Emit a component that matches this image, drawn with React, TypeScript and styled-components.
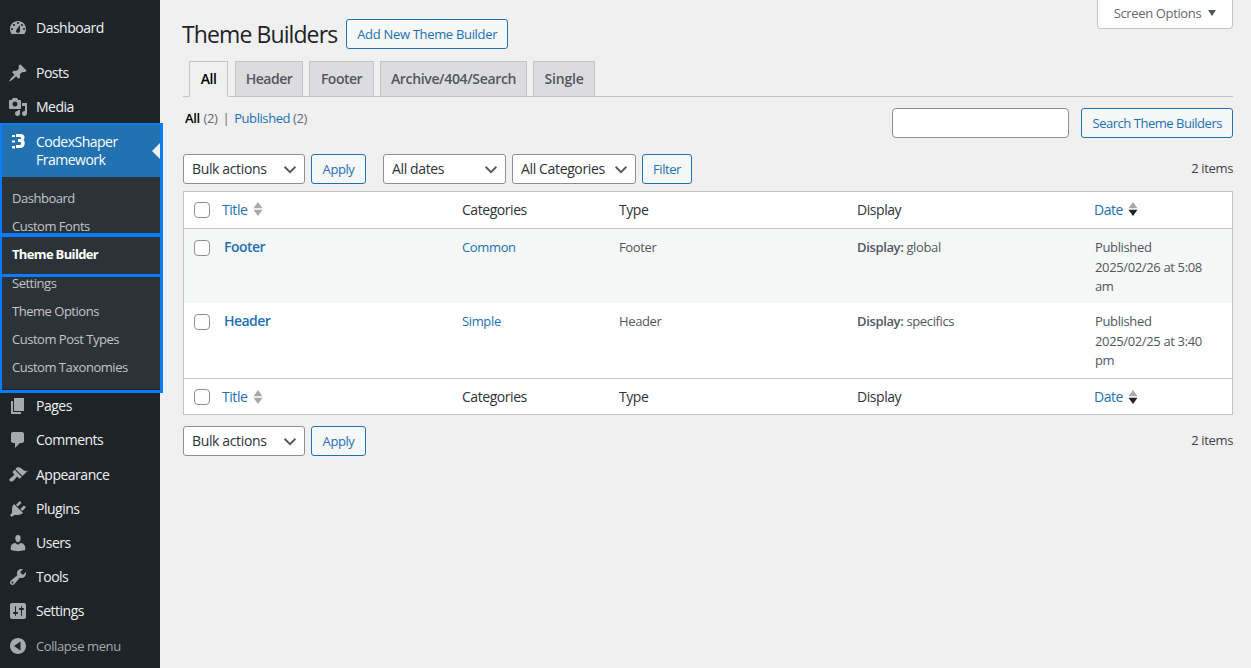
import React from 'react';
import styled, { createGlobalStyle } from 'styled-components';

const Global = createGlobalStyle`
  html, body { margin: 0; padding: 0; background: #f0f0f1; height: 100%; overflow: hidden; }
  body { font-family: "Open Sans", "Noto Sans", sans-serif; font-size: 13px; color: #3c434a; letter-spacing: -0.36px; }
  * { box-sizing: border-box; }
`;

const Page = styled.div`display: flex; width: 1251px; height: 668px; overflow: hidden;`;
const Side = styled.nav`width: 160px; flex: none; height: 668px; background: #1d2327; padding-top: 11px; position: relative; z-index: 2;`;
const Item = styled.div<{ $gapAfter?: number }>`
  height: 34px; display: flex; align-items: center; color: #f0f0f1; font-size: 14px; padding: 0 0 2px 36px; position: relative; letter-spacing: -0.5px;
  margin-bottom: ${p => p.$gapAfter ?? 0}px;
`;
const IconBox = styled.span`
  position: absolute; left: 8px; top: 7px; width: 20px; height: 20px; color: #a7aaad; display: block;
  svg { display: block; width: 20px; height: 20px; fill: currentColor; }
`;
const Group = styled.div`position: relative;`;
const Current = styled.div`
  height: 53px; background: #2271b1; color: #fff; font-size: 14px; line-height: 18px; padding: 9px 0 0 36px; position: relative; letter-spacing: -0.5px;
  &::after { content: ""; position: absolute; right: 0; top: 19px; border: 8px solid transparent; border-right-color: #f0f0f1; border-left-width: 0; }
`;
const LogoBox = styled(IconBox)`color: #fff; top: 8px;`;
const Sub = styled.div`background: #2c3338; height: 212px; padding-top: 7px; letter-spacing: -0.48px;`;
const SubItem = styled.div<{ $active?: boolean }>`
  height: ${p => (p.$active ? 29 : 28)}px; line-height: 28px; padding-left: 12px; font-size: 13px;
  color: ${p => (p.$active ? '#fff' : '#c3c4c7')}; font-weight: ${p => (p.$active ? 700 : 400)}; letter-spacing: ${p => (p.$active ? '-0.66px' : 'inherit')};
`;
const Outline = styled.div`position: absolute; left: 0; top: -1px; width: 163px; height: 270px; border: 2px solid #0a7cff; border-width: 2px 3px 3px 2px; pointer-events: none; z-index: 3;`;
const ActiveOutline = styled.div`position: absolute; left: 0; top: 109px; width: 163px; height: 44px; border: solid #0a7cff; border-width: 4px 3px 3px 2px; pointer-events: none; z-index: 3;`;
const Collapse = styled(Item)`color: #a7aaad; font-size: 13px; margin-top: 1px; padding-bottom: 0; letter-spacing: -0.4px;`;

const Main = styled.main`flex: 1; padding: 0 18px 0 23px; position: relative;`;
const ScreenOptions = styled.div`
  position: absolute; right: 18px; top: 0; width: 136px; height: 29px; background: #fff; border: 1px solid #c3c4c7; border-top: 0;
  border-radius: 0 0 4px 4px; display: flex; align-items: center; justify-content: center; gap: 7px; color: #646970; padding-bottom: 3px;
`;
const Caret = styled.span`width: 0; height: 0; border: 4.5px solid transparent; border-top: 6px solid #50575e; border-bottom: 0;`;
const TitleRow = styled.div`display: flex; align-items: center; gap: 9px; padding-top: 19px; height: 49px;`;
const H1 = styled.h1`margin: 0 0 0 -1px; font-size: 23px; font-weight: 400; color: #1d2327; line-height: 30px; letter-spacing: -0.9px;`;
const Btn = styled.button<{ $w?: number; $ls?: number }>`
  height: 30px; border: 1px solid #2271b1; border-radius: 3px; background: #f6f7f7; color: #2271b1; font: inherit; letter-spacing: ${p => p.$ls ?? -0.42}px; padding: 0 10px; white-space: nowrap;
  ${p => (p.$w ? `width: ${p.$w}px; padding: 0;` : '')}
`;
const Tabs = styled.div`display: flex; gap: 6px; margin-top: 12px; padding-left: 6px; height: 36px; border-bottom: 1px solid #c3c4c7;`;
const Tab = styled.div<{ $active?: boolean; $w: number; $ls?: number }>`
  width: ${p => p.$w}px; height: 36px; padding-bottom: 2px; border: 1px solid #c3c4c7; border-bottom: ${p => (p.$active ? '1px solid #f0f0f1' : '1px solid #c3c4c7')};
  background: ${p => (p.$active ? '#f0f0f1' : '#dcdcde')}; color: ${p => (p.$active ? '#000' : '#50575e')}; font-weight: 600; font-size: 14px; display: flex; align-items: center; justify-content: center;
  letter-spacing: ${p => p.$ls ?? -0.5}px; white-space: nowrap;
  ${p => (p.$active ? 'margin-right: 1px;' : '')}
`;
const SearchRow = styled.div`display: flex; justify-content: space-between; height: 57px;`;
const Filters = styled.div`padding: 12px 0 0 2px; line-height: 18px; color: #646970; letter-spacing: -0.42px;
  b { color: #000; font-weight: 600; margin-right: 1px; } a { color: #2271b1; } i { font-style: normal; color: #646970; margin: 0 5px 0 5px; }`;
const SearchBox = styled.div`display: flex; gap: 12px; padding-top: 11px;`;
const Input = styled.div`width: 177px; height: 30px; background: #fff; border: 1px solid #8c8f94; border-radius: 4px;`;
const Nav = styled.div`display: flex; align-items: center; height: 30px; gap: 6px;`;
const Select = styled.div<{ $w: number; $left?: number }>`
  width: ${p => p.$w}px; margin-left: ${p => p.$left ?? 0}px; height: 30px; border: 1px solid #8c8f94; border-radius: 3px; background: #fff; color: #2c3338; font-size: 14px; letter-spacing: -0.36px;
  padding: 0 0 2px 8px; display: flex; align-items: center; justify-content: space-between;
  svg { width: 18px; height: 18px; margin: 2px 5px 0 0; fill: none; stroke: #50575e; stroke-width: 2; flex: none; }
`;
const Count = styled.div`margin-left: auto; color: #3c434a; padding-bottom: 2px;`;
const Table = styled.table`width: 1050px; margin: 7px 0 11px; border-collapse: separate; border-spacing: 0; table-layout: fixed; background: #fff; border: 1px solid #c3c4c7; color: #50575e;`;
const Th = styled.th<{ $w?: number; $bottom?: boolean }>`
  ${p => (p.$w ? `width: ${p.$w}px;` : '')} height: ${p => (p.$bottom ? 36 : 37)}px; font-weight: 400; text-align: left; padding: 0 0 ${p => (p.$bottom ? 0 : 2)}px 10px; color: #2c3338; font-size: 14px; letter-spacing: -0.45px;
  border-${p => (p.$bottom ? 'top' : 'bottom')}: 1px solid #c3c4c7;
`;
const Row = styled.tr<{ $alt?: boolean; $h: number }>`background: ${p => (p.$alt ? '#f6f7f7' : '#fff')}; height: ${p => p.$h}px;`;
const Td = styled.td<{ $last?: boolean }>`vertical-align: top; padding: 9px 10px 0 ${p => (p.$last ? 11 : 10)}px; line-height: 19.5px;`;
const TitleTd = styled(Td)`padding-top: 8px;`;
const CheckTh = styled(Th)`padding: 0 0 0 10px;`;
const CheckTd = styled(Td)`padding: 11px 0 0 10px;`;
const Check = styled.div`width: 16px; height: 16px; border: 1px solid #8c8f94; border-radius: 4px; background: #fff;`;
const Sort = styled.a<{ $gap: number }>`color: #2271b1; display: inline-flex; align-items: center; gap: ${p => p.$gap}px;`;
const SortIcon = styled.svg`width: 10px; height: 16px; display: block;`;
const RowTitle = styled.a`color: #2271b1; font-weight: 600; font-size: 14px; padding-left: 2px; letter-spacing: -0.55px;`;
const Link = styled.a`color: #2271b1;`;
const Strong = styled.b`font-weight: 600;`;

const ICONS: Record<string, string> = {
  dashboard: 'M3.76 16h12.48c1.1-1.37 1.76-3.11 1.76-5 0-4.42-3.58-8-8-8s-8 3.58-8 8c0 1.89.66 3.63 1.76 5zM10 4c.55 0 1 .45 1 1s-.45 1-1 1-1-.45-1-1 .45-1 1-1zM6 6c.55 0 1 .45 1 1s-.45 1-1 1-1-.45-1-1 .45-1 1-1zm8 0c.55 0 1 .45 1 1s-.45 1-1 1-1-.45-1-1 .45-1 1-1zm-5.37 5.55L12 7v6c0 1.1-.9 2-2 2s-2-.9-2-2c0-.57.24-1.08.63-1.45zM4 10c.55 0 1 .45 1 1s-.45 1-1 1-1-.45-1-1 .45-1 1-1zm12 0c.55 0 1 .45 1 1s-.45 1-1 1-1-.45-1-1 .45-1 1-1z',
  post: 'M10.44 3.02l1.82-1.82 6.36 6.35-1.83 1.82c-1.05-.68-2.48-.57-3.41.36l-.75.75c-.92.93-1.04 2.35-.35 3.41l-1.83 1.82-2.41-2.41-2.8 2.79c-.42.42-3.38 2.71-3.8 2.29s1.86-3.39 2.28-3.81l2.79-2.79L4.1 9.36l1.83-1.82c1.05.69 2.48.57 3.4-.36l.75-.75c.93-.92 1.05-2.35.36-3.41z',
  media: 'M13 11V4c0-.55-.45-1-1-1h-1.67L9 1H5L3.67 3H2c-.55 0-1 .45-1 1v7c0 .55.45 1 1 1h10c.55 0 1-.45 1-1zM7 4.5c1.38 0 2.5 1.12 2.5 2.5S8.38 9.5 7 9.5 4.5 8.38 4.5 7 5.62 4.5 7 4.5zM14 6h5v10.5c0 1.38-1.12 2.5-2.5 2.5S14 17.88 14 16.5s1.12-2.5 2.5-2.5c.17 0 .34.02.5.05V9h-3V6zm-4 8.05V13h2v3.5c0 1.38-1.12 2.5-2.5 2.5S7 17.88 7 16.5 8.12 14 9.5 14c.17 0 .34.02.5.05z',
  page: 'M6 15V2h10v13H6zm-1 1h8v2H3V5h2v11z',
  comments: 'M5 2h9c1.1 0 2 .9 2 2v7c0 1.1-.9 2-2 2h-2l-5 5v-5H5c-1.1 0-2-.9-2-2V4c0-1.1.9-2 2-2z',
  appearance: 'M14.48 11.06L7.41 3.99l1.5-1.5c.5-.56 2.3-.47 3.51.32 1.21.8 1.43 1.28 2.91 2.1 1.18.64 2.45 1.26 4.45.85zm-.71.71L6.7 4.7 4.93 6.47c-.39.39-.39 1.02 0 1.41l1.06 1.06c.39.39.39 1.03 0 1.42-.6.6-1.43 1.11-2.21 1.69-.35.26-.7.53-1.01.84C1.43 13.23.91 14.96 1.89 16c.98 1 2.71.58 4.03-.64.31-.31.58-.66.84-1.01.58-.78 1.09-1.61 1.69-2.21.39-.39 1.02-.39 1.41 0l1.06 1.06c.39.39 1.02.39 1.41 0z',
  plugins: 'M13.11 4.36L9.87 7.6 8 5.73l3.24-3.24c.35-.34 1.05-.2 1.56.32.52.51.66 1.21.31 1.55zm-8 1.77l.91-1.12 9.01 9.01-1.19.84c-.71.71-2.63 1.16-3.82 1.16H6.14L4.9 17.26c-.59.59-1.54.59-2.12 0-.59-.58-.59-1.53 0-2.12l1.24-1.24v-3.88c0-1.13.4-3.19 1.09-3.89zm7.26 3.97l3.24-3.24c.34-.35 1.04-.21 1.55.31.52.51.66 1.21.31 1.55l-3.24 3.25z',
  users: 'M10 9.25c-2.27 0-2.73-3.44-2.73-3.44C7 4.02 7.82 2 9.97 2c2.16 0 2.98 2.02 2.71 3.81 0 0-.41 3.44-2.68 3.44zm0 2.57L12.72 10c2.39 0 4.52 2.33 4.52 4.53v2.49s-3.65 1.13-7.24 1.13c-3.65 0-7.24-1.13-7.24-1.13v-2.49c0-2.25 1.94-4.48 4.47-4.48z',
  tools: 'M16.68 9.77c-1.34 1.34-3.3 1.67-4.95.99l-5.41 6.52c-.99.99-2.59.99-3.58 0s-.99-2.59 0-3.57l6.52-5.42c-.68-1.65-.35-3.61.99-4.95 1.28-1.28 3.12-1.62 4.72-1.06l-2.89 2.89 2.82 2.82 2.86-2.87c.53 1.58.18 3.39-1.08 4.65zM3.81 16.21c.4.39 1.04.39 1.43 0 .4-.4.4-1.04 0-1.43-.39-.4-1.03-.4-1.43 0-.39.39-.39 1.03 0 1.43z',
  settings: 'M18 16V4c0-1.1-.9-2-2-2H4c-1.1 0-2 .9-2 2v12c0 1.1.9 2 2 2h12c1.1 0 2-.9 2-2zM8 11h1c.55 0 1 .45 1 1s-.45 1-1 1H8v1.5c0 .28-.22.5-.5.5s-.5-.22-.5-.5V13H6c-.55 0-1-.45-1-1s.45-1 1-1h1V5.5c0-.28.22-.5.5-.5s.5.22.5.5V11zm5-2h-1c-.55 0-1-.45-1-1s.45-1 1-1h1V5.5c0-.28.22-.5.5-.5s.5.22.5.5V7h1c.55 0 1 .45 1 1s-.45 1-1 1h-1v5.5c0 .28-.22.5-.5.5s-.5-.22-.5-.5V9z',
  collapse: 'M18 10c0-4.42-3.58-8-8-8s-8 3.58-8 8 3.58 8 8 8 8-3.58 8-8zm-5.5-4.5v9L6 10z',
};
const Dash = ({ n }: { n: string }) => <svg viewBox="0 0 20 20"><path d={ICONS[n]} /></svg>;
const Chevron = () => <svg viewBox="0 0 20 20"><path d="M4 7.5l6 6 6-6" /></svg>;
const SortArrows = ({ active }: { active?: boolean }) => (
  <SortIcon viewBox="0 0 10 16">
    <path d="M5 1l4.5 6.2H.5z" fill="#a7aaad" />
    <path d="M5 15l4.5-6.2H.5z" fill={active ? '#1d2327' : '#a7aaad'} />
  </SortIcon>
);

const HeadRow = ({ bottom }: { bottom?: boolean }) => (
  <tr>
    <CheckTh $w={28} $bottom={bottom}><Check /></CheckTh>
    <Th $w={240} $bottom={bottom}><Sort $gap={6}>Title <SortArrows /></Sort></Th>
    <Th $w={157} $bottom={bottom}>Categories</Th>
    <Th $w={238} $bottom={bottom}>Type</Th>
    <Th $w={237} $bottom={bottom}>Display</Th>
    <Th $bottom={bottom}><Sort $gap={5}>Date <SortArrows active /></Sort></Th>
  </tr>
);

export default function App() {
  return (
    <Page>
      <Global />
      <Side>
        <Item $gapAfter={11}><IconBox><Dash n="dashboard" /></IconBox>Dashboard</Item>
        <Item><IconBox><Dash n="post" /></IconBox>Posts</Item>
        <Item><IconBox><Dash n="media" /></IconBox>Media</Item>
        <Group>
          <Current>
            <LogoBox>
              <svg viewBox="0 0 20 20">
                <path d="M8 2h5c2 0 3.5 1.4 3.5 3.4 0 1.2-.5 2-1.2 2.6.9.6 1.5 1.6 1.5 3 0 2.4-1.6 5-4 5H8v-3h4c.8 0 1.2-.6 1.2-1.4S12.8 10 12 10h-2V7h2c.7 0 1.2-.5 1.2-1.2S12.7 5 12 5H8z" />
                <rect x="4" y="3" width="3" height="2" /><rect x="4" y="8.5" width="3" height="2" /><rect x="4" y="14" width="3" height="2.5" />
              </svg>
            </LogoBox>
            CodexShaper<br />Framework
          </Current>
          <Sub>
            <SubItem>Dashboard</SubItem>
            <SubItem>Custom Fonts</SubItem>
            <SubItem $active>Theme Builder</SubItem>
            <SubItem>Settings</SubItem>
            <SubItem>Theme Options</SubItem>
            <SubItem>Custom Post Types</SubItem>
            <SubItem>Custom Taxonomies</SubItem>
          </Sub>
          <Outline />
          <ActiveOutline />
        </Group>
        <Item><IconBox><Dash n="page" /></IconBox>Pages</Item>
        <Item $gapAfter={1}><IconBox><Dash n="comments" /></IconBox>Comments</Item>
        <Item><IconBox><Dash n="appearance" /></IconBox>Appearance</Item>
        <Item><IconBox><Dash n="plugins" /></IconBox>Plugins</Item>
        <Item><IconBox><Dash n="users" /></IconBox>Users</Item>
        <Item><IconBox><Dash n="tools" /></IconBox>Tools</Item>
        <Item><IconBox><Dash n="settings" /></IconBox>Settings</Item>
        <Collapse><IconBox><Dash n="collapse" /></IconBox>Collapse menu</Collapse>
      </Side>
      <Main>
        <ScreenOptions>Screen Options <Caret /></ScreenOptions>
        <TitleRow><H1>Theme Builders</H1><Btn $ls={-0.32}>Add New Theme Builder</Btn></TitleRow>
        <Tabs>
          <Tab $active $w={39}>All</Tab>
          <Tab $w={68}>Header</Tab>
          <Tab $w={65}>Footer</Tab>
          <Tab $w={147} $ls={-0.34}>Archive/404/Search</Tab>
          <Tab $w={62} $ls={-0.2}>Single</Tab>
        </Tabs>
        <SearchRow>
          <Filters><b>All</b> (2)<i>|</i><a>Published</a> (2)</Filters>
          <SearchBox><Input /><Btn $ls={-0.47}>Search Theme Builders</Btn></SearchBox>
        </SearchRow>
        <Nav>
          <Select $w={122}>Bulk actions<Chevron /></Select>
          <Btn $w={55}>Apply</Btn>
          <Select $w={123} $left={11}>All dates<Chevron /></Select>
          <Select $w={124}>All Categories<Chevron /></Select>
          <Btn $w={50}>Filter</Btn>
          <Count>2 items</Count>
        </Nav>
        <Table>
          <thead><HeadRow /></thead>
          <tbody>
            <Row $alt $h={74}>
              <CheckTd><Check /></CheckTd>
              <TitleTd><RowTitle>Footer</RowTitle></TitleTd>
              <Td><Link>Common</Link></Td>
              <Td>Footer</Td>
              <Td><Strong>Display:</Strong> global</Td>
              <Td $last>Published<br />2025/02/26 at 5:08 am</Td>
            </Row>
            <Row $h={75}>
              <CheckTd><Check /></CheckTd>
              <TitleTd><RowTitle>Header</RowTitle></TitleTd>
              <Td><Link>Simple</Link></Td>
              <Td>Header</Td>
              <Td><Strong>Display:</Strong> specifics</Td>
              <Td $last>Published<br />2025/02/25 at 3:40 pm</Td>
            </Row>
          </tbody>
          <tfoot><HeadRow bottom /></tfoot>
        </Table>
        <Nav>
          <Select $w={122}>Bulk actions<Chevron /></Select>
          <Btn $w={55}>Apply</Btn>
          <Count>2 items</Count>
        </Nav>
      </Main>
    </Page>
  );
}
